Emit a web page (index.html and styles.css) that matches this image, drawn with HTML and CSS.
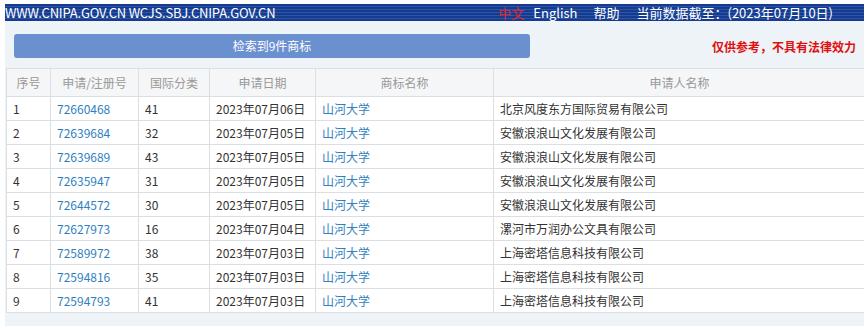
FILE: index.html
```html
<!DOCTYPE html>
<html lang="zh-CN">
<head>
<meta charset="utf-8">
<link rel="stylesheet" href="styles.css">
</head>
<body>
<div class="page">
  <div class="topbar">
    <span class="sites">WWW.CNIPA.GOV.CN WCJS.SBJ.CNIPA.GOV.CN</span>
    <nav class="nav">
      <span class="lang-cn">中文</span>
      <span class="lang-en">English</span>
      <span class="help">帮助</span>
      <span class="date">当前数据截至：(2023年07月10日)</span>
    </nav>
  </div>
  <div class="panel">
    <div class="toolbar">
      <div class="result-btn">检索到9件商标</div>
      <div class="notice">仅供参考，不具有法律效力</div>
    </div>
    <table class="results">
      <colgroup>
        <col class="c1"><col class="c2"><col class="c3"><col class="c4"><col class="c5"><col class="c6">
      </colgroup>
      <thead>
        <tr><th>序号</th><th>申请/注册号</th><th>国际分类</th><th>申请日期</th><th>商标名称</th><th>申请人名称</th></tr>
      </thead>
      <tbody>
        <tr><td>1</td><td class="link">72660468</td><td>41</td><td>2023年07月06日</td><td class="link">山河大学</td><td>北京风度东方国际贸易有限公司</td></tr>
        <tr><td>2</td><td class="link">72639684</td><td>32</td><td>2023年07月05日</td><td class="link">山河大学</td><td>安徽浪浪山文化发展有限公司</td></tr>
        <tr><td>3</td><td class="link">72639689</td><td>43</td><td>2023年07月05日</td><td class="link">山河大学</td><td>安徽浪浪山文化发展有限公司</td></tr>
        <tr><td>4</td><td class="link">72635947</td><td>31</td><td>2023年07月05日</td><td class="link">山河大学</td><td>安徽浪浪山文化发展有限公司</td></tr>
        <tr><td>5</td><td class="link">72644572</td><td>30</td><td>2023年07月05日</td><td class="link">山河大学</td><td>安徽浪浪山文化发展有限公司</td></tr>
        <tr><td>6</td><td class="link">72627973</td><td>16</td><td>2023年07月04日</td><td class="link">山河大学</td><td>漯河市万润办公文具有限公司</td></tr>
        <tr><td>7</td><td class="link">72589972</td><td>38</td><td>2023年07月03日</td><td class="link">山河大学</td><td>上海密塔信息科技有限公司</td></tr>
        <tr><td>8</td><td class="link">72594816</td><td>35</td><td>2023年07月03日</td><td class="link">山河大学</td><td>上海密塔信息科技有限公司</td></tr>
        <tr><td>9</td><td class="link">72594793</td><td>41</td><td>2023年07月03日</td><td class="link">山河大学</td><td>上海密塔信息科技有限公司</td></tr>
      </tbody>
    </table>
  </div>
</div>
</body>
</html>
```
FILE: styles.css
```css
html, body {
  margin: 0;
  padding: 0;
  background: #ffffff;
  overflow: hidden;
}
body {
  font-family: "Noto Sans CJK SC", "Noto Sans", sans-serif;
  font-size: 12px;
  color: #333;
}
.page {
  padding-top: 4px;
  padding-left: 5px;
  width: 864px;
}
.topbar {
  height: 17px;
  display: flex;
  align-items: center;
  justify-content: space-between;
  color: #fff;
  font-size: 13px;
  background: repeating-linear-gradient(to bottom, #163a8e 0px, #163a8e 2px, #2c56a8 2px, #2c56a8 3px);
  padding-right: 36px;
  white-space: nowrap;
  line-height: 17px;
}
.sites {
  letter-spacing: -0.2px;
}
.nav {
  display: flex;
}
.lang-cn { color: #e0262a; margin-right: 9px; }
.lang-en { margin-right: 16px; }
.help { margin-right: 17px; }
.panel {
  background: #eef3f8;
  padding-top: 13px;
  padding-left: 1px;
  padding-bottom: 14px;
}
.toolbar {
  display: flex;
  align-items: center;
  justify-content: space-between;
  padding-left: 8px;
  padding-right: 13px;
  margin-bottom: 10px;
}
.result-btn {
  width: 516px;
  height: 24px;
  line-height: 24px;
  background: #6b90d0;
  border-radius: 3px;
  color: #fff;
  text-align: center;
  font-size: 12px;
}
.notice {
  color: #e01010;
  font-weight: bold;
  font-size: 12px;
}
.results {
  border-collapse: collapse;
  width: 860px;
  background: #fff;
  table-layout: fixed;
}
.c1 { width: 44px; }
.c2 { width: 88px; }
.c3 { width: 71px; }
.c4 { width: 106px; }
.c5 { width: 178px; }
.results th, .results td {
  border: 1px solid #dcdfe2;
  padding: 0 6px;
  text-align: left;
  white-space: nowrap;
}
.results th {
  height: 27px;
  background: #f5f6f7;
  color: #999;
  font-weight: normal;
  text-align: center;
}
.results td {
  height: 23px;
  line-height: 23px;
}
.results td.link {
  color: #2f7fc1;
}
```
